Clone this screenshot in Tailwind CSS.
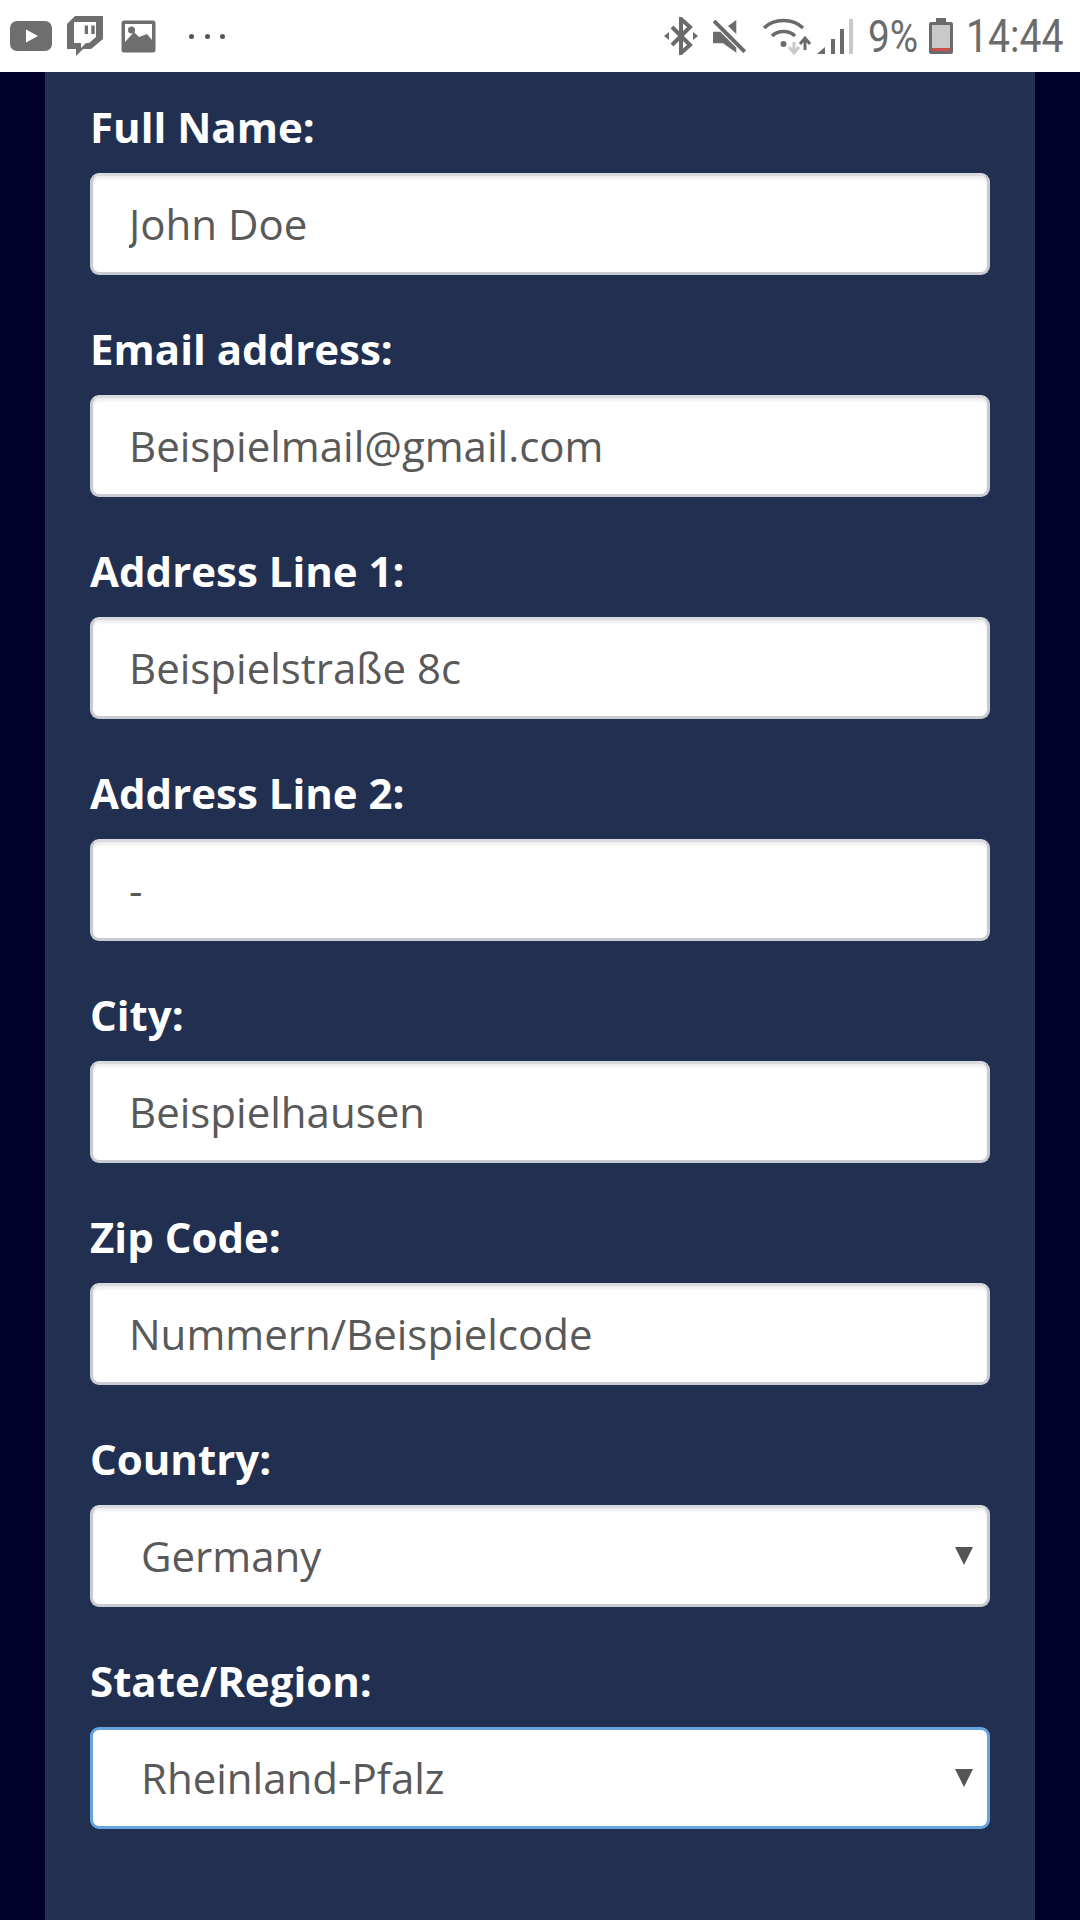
<!DOCTYPE html>
<html lang="en">
<head>
    <meta charset="UTF-8">
    <meta name="viewport" content="width=device-width, initial-scale=1">
    <title>Checkout</title>
    <script src="https://cdn.jsdelivr.net/npm/@tailwindcss/browser@4"></script>
</head>
<body class="w-[1080px] h-[1920px] overflow-hidden bg-[#000028] font-['Open_Sans',sans-serif]">
    <!-- Status bar -->
    <div class="h-[72px] bg-white flex items-center justify-between pl-[10px] pr-[17px]">
        <div class="flex items-center">
            <svg class="w-[42px] h-[30px]" viewBox="0 0 42 30"><rect width="42" height="30" rx="7" fill="#6e6e6e"/><path d="M16 8.500 28 15 16 21.500Z" fill="#fff"/></svg>
            <svg class="w-[36px] h-[40px] ml-[15px] -mt-[1px]" viewBox="0 0 36 40"><path fill-rule="evenodd" d="M8 0H36V23L24 33H16L9 40V33H0V8ZM7 6V27H14V32L19 27H22L29 21V6ZM17.700 9.500H21V18H17.700ZM24.300 9.500H27.700V18H24.300Z" fill="#6e6e6e"/></svg>
            <svg class="w-[35px] h-[33px] ml-[18px]" viewBox="0 0 35 33"><rect x="0.500" y="0.500" width="34" height="32" rx="2.500" fill="#6e6e6e"/><rect x="4" y="4" width="27" height="19" fill="#fff"/><circle cx="10.500" cy="10" r="3.500" fill="#6e6e6e"/><path d="M4 22 13 12 18 17 26 14 31 20V29H4Z" fill="#6e6e6e"/></svg>
            <div class="flex gap-[10.500px] ml-[33px]">
                <span class="w-[5px] h-[5px] rounded-full bg-[#555]"></span>
                <span class="w-[5px] h-[5px] rounded-full bg-[#555]"></span>
                <span class="w-[5px] h-[5px] rounded-full bg-[#555]"></span>
            </div>
        </div>
        <div class="flex items-center text-[#6b6b6b] font-['Roboto',sans-serif]">
            <svg class="w-[34px] h-[38px]" viewBox="0 0 34 38"><path d="M8 10 26 28 17 36V2L26 10 8 28" fill="none" stroke="#6b6b6b" stroke-width="4"/><path d="M0 19 5 15V23ZM34 19 29 15V23Z" fill="#6b6b6b"/></svg>
            <svg class="w-[33px] h-[33px] ml-[15px]" viewBox="0 0 33 33"><path d="M23.300 0V14L15 6ZM0 11.700H7.300L23.300 27.700V32.700L10 23.300H0Z" fill="#6b6b6b"/><path d="M1 1 31.700 31.700" stroke="#6b6b6b" stroke-width="4"/></svg>
            <svg class="w-[48px] h-[37px] ml-[17px]" viewBox="0 0 48 37"><path d="M1 10C11 0 30 0 40 10M9 18C15 12 26 12 32 18" fill="none" stroke="#6b6b6b" stroke-width="3.500"/><circle cx="20.500" cy="26" r="3" fill="#6b6b6b"/><path d="M31 24V34M26 29 31 35 36 29" fill="none" stroke="#c9c9c9" stroke-width="3"/><path d="M42 32V22M37 26 42 20 47 26" fill="none" stroke="#6b6b6b" stroke-width="3"/></svg>
            <svg class="w-[36px] h-[35px] ml-[6px]" viewBox="0 0 36 35"><path d="M0 35 8 28V35ZM14 20H18V35H14ZM23 10H27V35H23Z" fill="#6b6b6b"/><path d="M32 0H36V35H32Z" fill="#c9c9c9"/></svg>
            <span class="text-[45px] leading-none ml-[15px] w-[48px] inline-block origin-left scale-x-[.86] whitespace-nowrap">9%</span>
            <svg class="w-[24px] h-[36px] ml-[13px]" viewBox="0 0 24 36"><path d="M7 0H17V4H22C23 4 24 5 24 6V34C24 35 23 36 22 36H2C1 36 0 35 0 34V6C0 5 1 4 2 4H7Z" fill="#6b6b6b"/><rect x="3" y="7" width="18" height="26" fill="#c9c9c9"/><rect x="3" y="30" width="18" height="3" fill="#c9534c"/></svg>
            <span class="text-[46px] leading-none ml-[13px] w-[97px] inline-block origin-left scale-x-[.85] whitespace-nowrap">14:44</span>
        </div>
    </div>

    <!-- Form panel -->
    <form class="mx-[45px] h-[1848px] bg-[#212f50] px-[45px] pt-[25px] flex flex-col gap-[44px]">
        <div class="flex flex-col gap-[16px]">
            <label class="text-[42px] leading-[60px] font-bold text-white">Full Name:</label>
            <input value="John Doe" class="w-[900px] h-[102px] rounded-[9px] bg-white border-[3px] border-[#c8ccd2] border-t-[#d8dadf] pl-[36px] pb-[2px] text-[42px] text-[#595959] outline-none shadow-[inset_0_3px_3px_rgba(0,0,0,.07)]">
        </div>
        <div class="flex flex-col gap-[16px]">
            <label class="text-[42px] leading-[60px] font-bold text-white">Email address:</label>
            <input value="Beispielmail@gmail.com" class="w-[900px] h-[102px] rounded-[9px] bg-white border-[3px] border-[#c8ccd2] border-t-[#d8dadf] pl-[36px] pb-[2px] text-[42px] text-[#595959] outline-none shadow-[inset_0_3px_3px_rgba(0,0,0,.07)]">
        </div>
        <div class="flex flex-col gap-[16px]">
            <label class="text-[42px] leading-[60px] font-bold text-white">Address Line 1:</label>
            <input value="Beispielstraße 8c" class="w-[900px] h-[102px] rounded-[9px] bg-white border-[3px] border-[#c8ccd2] border-t-[#d8dadf] pl-[36px] pb-[2px] text-[42px] text-[#595959] outline-none shadow-[inset_0_3px_3px_rgba(0,0,0,.07)]">
        </div>
        <div class="flex flex-col gap-[16px]">
            <label class="text-[42px] leading-[60px] font-bold text-white">Address Line 2:</label>
            <input value="-" class="w-[900px] h-[102px] rounded-[9px] bg-white border-[3px] border-[#c8ccd2] border-t-[#d8dadf] pl-[36px] pb-[2px] text-[42px] text-[#595959] outline-none shadow-[inset_0_3px_3px_rgba(0,0,0,.07)]">
        </div>
        <div class="flex flex-col gap-[16px]">
            <label class="text-[42px] leading-[60px] font-bold text-white">City:</label>
            <input value="Beispielhausen" class="w-[900px] h-[102px] rounded-[9px] bg-white border-[3px] border-[#c8ccd2] border-t-[#d8dadf] pl-[36px] pb-[2px] text-[42px] text-[#595959] outline-none shadow-[inset_0_3px_3px_rgba(0,0,0,.07)]">
        </div>
        <div class="flex flex-col gap-[16px]">
            <label class="text-[42px] leading-[60px] font-bold text-white">Zip Code:</label>
            <input value="Nummern/Beispielcode" class="w-[900px] h-[102px] rounded-[9px] bg-white border-[3px] border-[#c8ccd2] border-t-[#d8dadf] pl-[36px] pb-[2px] text-[42px] text-[#595959] outline-none shadow-[inset_0_3px_3px_rgba(0,0,0,.07)]">
        </div>
        <div class="flex flex-col gap-[16px]">
            <label class="text-[42px] leading-[60px] font-bold text-white">Country:</label>
            <div class="relative w-[900px] h-[102px] rounded-[9px] bg-white border-[3px] border-[#c8ccd2] border-t-[#d8dadf] pl-[48px] pb-[2px] flex items-center text-[42px] text-[#595959] shadow-[inset_0_3px_3px_rgba(0,0,0,.07)]">
                Germany
                <svg class="absolute right-[14px] top-[39px] w-[18px] h-[18px]" viewBox="0 0 18 18"><path d="M0 0H18L9 18Z" fill="#555"/></svg>
            </div>
        </div>
        <div class="flex flex-col gap-[16px]">
            <label class="text-[42px] leading-[60px] font-bold text-white">State/Region:</label>
            <div class="relative w-[900px] h-[102px] rounded-[9px] bg-white border-[3px] border-[#66a4de] pl-[48px] pb-[2px] flex items-center text-[42px] text-[#595959]">
                Rheinland-Pfalz
                <svg class="absolute right-[14px] top-[39px] w-[18px] h-[18px]" viewBox="0 0 18 18"><path d="M0 0H18L9 18Z" fill="#555"/></svg>
            </div>
        </div>
    </form>
</body>
</html>
